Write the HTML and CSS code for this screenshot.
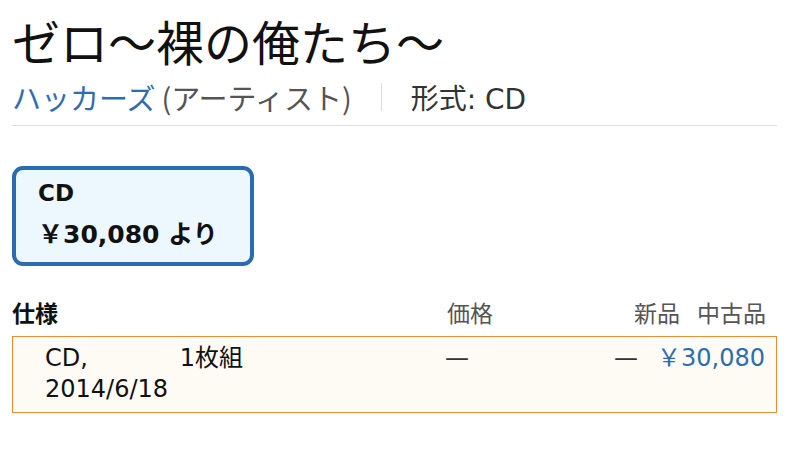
FILE: index.html
```html
<!DOCTYPE html>
<html lang="ja">
<head>
    <meta charset="UTF-8">
    <meta name="viewport" content="width=device-width, initial-scale=1.0">
    <title>ゼロ～裸の俺たち～</title>
    <link rel="stylesheet" href="styles.css">
</head>
<body>
    <main class="page">
        <header class="product-head">
            <h1 class="title">ゼロ～裸の俺たち～</h1>
            <div class="byline">
                <a href="#" class="artist">ハッカーズ</a>
                <span class="role">(アーティスト)</span>
                <span class="sep"></span>
                <span class="format">形式: CD</span>
            </div>
        </header>

        <section class="swatches">
            <a href="#" class="swatch selected">
                <span class="swatch-name">CD</span>
                <span class="swatch-price">￥30,080 より</span>
            </a>
        </section>

        <section class="offers">
            <div class="offers-head">
                <span class="col-spec">仕様</span>
                <span class="col-price">価格</span>
                <span class="col-new">新品</span>
                <span class="col-used">中古品</span>
            </div>
            <div class="offer-row">
                <div class="col-spec">
                    <div class="spec-line">
                        <span>CD,</span>
                        <span>1枚組</span>
                    </div>
                    <div>2014/6/18</div>
                </div>
                <span class="col-price">—</span>
                <span class="col-new">—</span>
                <a href="#" class="col-used used-price">￥30,080</a>
            </div>
        </section>
    </main>
</body>
</html>
```

FILE: styles.css
```css
body {
    margin: 0;
    background-color: #fff;
    color: #111;
    font-family: "DejaVu Sans", "Noto Sans CJK JP", sans-serif;
}
a {
    text-decoration: none;
}
.page {
    width: 765px;
    padding: 11px 0 0 12px;
}

/* title block */
.product-head {
    padding-bottom: 10px;
    border-bottom: 1px solid #dcdfdf;
}
.title {
    margin: 0;
    font-family: "Noto Sans CJK JP", sans-serif;
    font-size: 48px;
    font-weight: 400;
    line-height: 58px;
    color: #111;
}
.byline {
    display: flex;
    align-items: center;
    margin-top: 10px;
    height: 36px;
    font-family: "Noto Sans CJK JP", sans-serif;
    font-size: 29px;
    color: #555;
}
.artist {
    color: #2e6eb0;
}
.role {
    margin-left: 6px;
    color: #555;
}
.sep {
    width: 1px;
    height: 28px;
    margin: 0 29px;
    background-color: #ddd;
}
.format {
    font-family: "DejaVu Sans", "Noto Sans CJK JP", sans-serif;
    font-size: 28px;
    color: #333;
}

/* format swatch */
.swatches {
    margin-top: 40px;
}
.swatch {
    display: flex;
    flex-direction: column;
    box-sizing: border-box;
    width: 242px;
    height: 100px;
    padding: 2px 0 0 22px;
    border: 4px solid #2a6cad;
    border-radius: 11px;
    background-color: #edf7fe;
    color: #111;
    font-weight: bold;
    font-size: 23px;
    line-height: 42px;
}
.swatch-price {
    font-size: 25px;
}

/* offers table */
.offers {
    margin-top: 31px;
    font-size: 24px;
}
.offers-head {
    display: flex;
    padding-right: 11px;
    font-size: 23px;
    line-height: 30px;
    font-family: "Noto Sans CJK JP", sans-serif;
    color: #555;
}
.offers-head .col-spec {
    width: 435px;
    font-weight: bold;
    color: #111;
}
.offers-head .col-price {
    flex: 1;
}
.offers-head .col-new {
    margin-right: 17px;
}
.offer-row {
    display: flex;
    align-items: flex-start;
    margin-top: 9px;
    padding: 6px 11px 7px 32px;
    border: 1px solid #eb8d35;
    background-color: #fefaf4;
    line-height: 31px;
    color: #111;
}
.offer-row .col-spec {
    width: 400px;
}
.spec-line {
    display: flex;
    justify-content: space-between;
    width: 198px;
}
.offer-row .col-price {
    flex: 1;
    color: #333;
}
.offer-row .col-new {
    margin-right: 19px;
    color: #333;
}
.used-price {
    color: #2e6eb0;
}
```
